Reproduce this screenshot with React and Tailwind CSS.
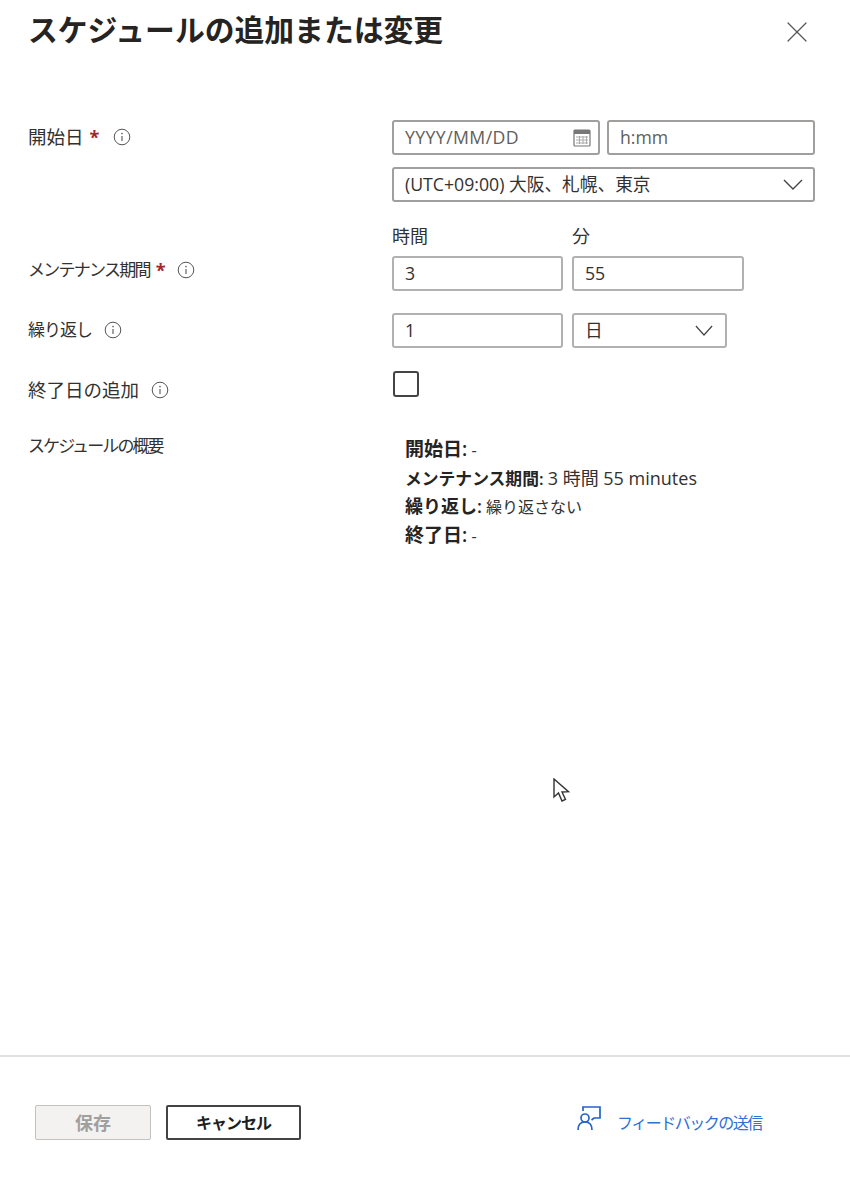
import { X } from 'lucide-react';

const FONT = "font-['Open_Sans','Noto_Sans_CJK_JP',sans-serif]";

function Info() {
  return (
    <svg width="18" height="18" viewBox="0 0 18 18" fill="none" className="shrink-0 text-[#555]">
      <circle cx="9" cy="9" r="7.8" stroke="currentColor" strokeWidth="1" />
      <path d="M9 8v5" stroke="currentColor" strokeWidth="1.1" />
      <circle cx="9" cy="5.6" r="0.8" fill="currentColor" />
    </svg>
  );
}

function Label({ text, required, textClass, className = '' }) {
  return (
    <div className={`flex items-center gap-3 w-[364px] shrink-0 pl-7 text-[#323130] h-[34px] ${className}`}>
      <span className="flex items-center gap-[6px]">
        <span className={textClass}>{text}</span>
        {required && <span className="text-[#a4262c] text-lg font-bold leading-none">*</span>}
      </span>
      <Info />
    </div>
  );
}

function Field({ children, className = '' }) {
  return (
    <div className={`h-[35px] border-2 rounded-[3px] flex items-center pl-[11px] text-[17.7px] text-[#323130] bg-white ${className}`}>
      {children}
    </div>
  );
}

function Chevron({ width = 20 }) {
  return (
    <svg width={width} height="11" viewBox="0 0 20 11" fill="none" stroke="#444" strokeWidth="1.4" preserveAspectRatio="none">
      <path d="M1 1l9 9 9-9" />
    </svg>
  );
}

function CalendarIcon() {
  return (
    <svg width="18" height="18" viewBox="0 0 18 18" className="text-[#777]">
      <rect x="1" y="1" width="16" height="16" rx="1" fill="none" stroke="currentColor" strokeWidth="1.2" />
      <rect x="1" y="1" width="16" height="4" fill="currentColor" />
      <path d="M3 8h12M3 11h12M3 14h12M6.5 7v8M10 7v8M13.5 7v8" stroke="#aaa" strokeWidth="1" />
    </svg>
  );
}

function FeedbackIcon() {
  return (
    <svg width="24" height="25" viewBox="0 0 24 25" fill="none" stroke="#2563c9" strokeWidth="1.7">
      <path d="M6 5V1h17v11h-6l-2.5 2" />
      <circle cx="8" cy="12" r="4" />
      <path d="M1 24c0-5 2.5-8 7-8s7 3 7 8" />
    </svg>
  );
}

function Cursor() {
  return (
    <svg width="18" height="26" viewBox="0 0 18 26" fill="white" stroke="#333" strokeWidth="1.4" className="absolute left-[553px] top-[778px]">
      <path d="M1 1v18l4.5-4 3.5 8 3.5-1.6-3.5-7.4 6.5-.4z" />
    </svg>
  );
}

export default function App() {
  return (
    <div className={`relative w-[850px] h-[1186px] bg-white flex flex-col overflow-hidden ${FONT}`}>
      {/* Header */}
      <div className="flex items-start justify-between pl-7 pr-[35px] pt-[8px] h-[120px] shrink-0">
        <h1 className="text-[29.8px] leading-[44px] font-semibold text-[#252423]">スケジュールの追加または変更</h1>
        <button className="mt-[6px] text-[#555]">
          <X size={36} strokeWidth={0.8} />
        </button>
      </div>

      {/* Form */}
      <div className="flex-1 flex flex-col">
        <div className="flex">
          <Label text="開始日" required textClass="text-[18.5px]" className="gap-[14px]" />
          <div className="w-[423px] ml-[28px] flex flex-col gap-3">
            <div className="flex gap-[7px]">
              <Field className="w-[208px] justify-between pr-[7px] border-[#a19f9d]">
                <span className="text-[#605e5c] tracking-[0.4px]">YYYY/MM/DD</span>
                <CalendarIcon />
              </Field>
              <Field className="w-[208px] border-[#a19f9d]">
                <span className="text-[#605e5c]">h:mm</span>
              </Field>
            </div>
            <Field className="justify-between pr-[10px] border-[#a19f9d]">
              <span>(UTC+09:00) 大阪、札幌、東京</span>
              <Chevron />
            </Field>
          </div>
        </div>

        <div className="flex mt-[23px] ml-[392px] gap-[9px] text-[18px] leading-[22px] text-[#323130]">
          <span className="w-[171px]">時間</span>
          <span>分</span>
        </div>

        <div className="flex mt-[9px]">
          <Label text="メンテナンス期間" required textClass="text-[17px] tracking-[-1.75px]" className="-mt-[3px]" />
          <div className="ml-[28px] flex gap-[9px]">
            <Field className="w-[171px] border-[#b3b1af]">3</Field>
            <Field className="w-[172px] border-[#b3b1af]">55</Field>
          </div>
        </div>

        <div className="flex mt-[22px]">
          <Label text="繰り返し" textClass="text-[17px] tracking-[-1px]" />
          <div className="ml-[28px] flex gap-[9px]">
            <Field className="w-[171px] border-[#b3b1af]">1</Field>
            <Field className="w-[155px] justify-between pr-[12px] border-[#b3b1af]">
              <span>日</span>
              <Chevron width={18} />
            </Field>
          </div>
        </div>

        <div className="flex mt-[23px]">
          <Label text="終了日の追加" textClass="text-[18.5px]" className="mt-[2px]" />
          <div className="ml-[29px] w-[26px] h-[26px] border-2 border-[#444] rounded-[3px]" />
        </div>

        <div className="flex mt-[27px]">
          <div className="w-[364px] shrink-0 pl-7 text-[17px] tracking-[-1.9px] text-[#323130] leading-[24px]">スケジュールの概要</div>
          <div className="ml-[41px] text-[16px] leading-[27.6px] text-[#323130] mt-[2px]">
            <div><b className="text-[19px] font-semibold text-[#252423]">開始日:</b> -</div>
            <div>
              <b className="text-[16.8px] font-semibold text-[#252423]">メンテナンス期間:</b> <span className="text-[18px]">3 時間 55 minutes</span>
            </div>
            <div><b className="text-[18px] font-semibold text-[#252423]">繰り返し:</b> 繰り返さない</div>
            <div><b className="text-[19px] font-semibold text-[#252423]">終了日:</b> -</div>
          </div>
        </div>
      </div>

      {/* Footer */}
      <div className="h-[131px] shrink-0 border-t-2 border-[#e1e1e1] flex items-start pl-[35px] pt-[48px]">
        <button className="w-[116px] h-[35px] rounded-[2px] border border-[#c4c2c0] bg-[#f3f2f1] text-lg font-semibold text-[#a19f9d]">保存</button>
        <button className="ml-[15px] w-[135px] h-[35px] rounded-[2px] border-2 border-[#444] bg-white text-base tracking-[-1px] font-semibold text-[#201f1e]">キャンセル</button>
        <a className="ml-[276px] mt-[1px] flex items-start gap-[16px] text-[#2f6fd6] text-base tracking-[-1.5px]">
          <FeedbackIcon />
          <span className="mt-[5px]">フィードバックの送信</span>
        </a>
      </div>

      <Cursor />
    </div>
  );
}
